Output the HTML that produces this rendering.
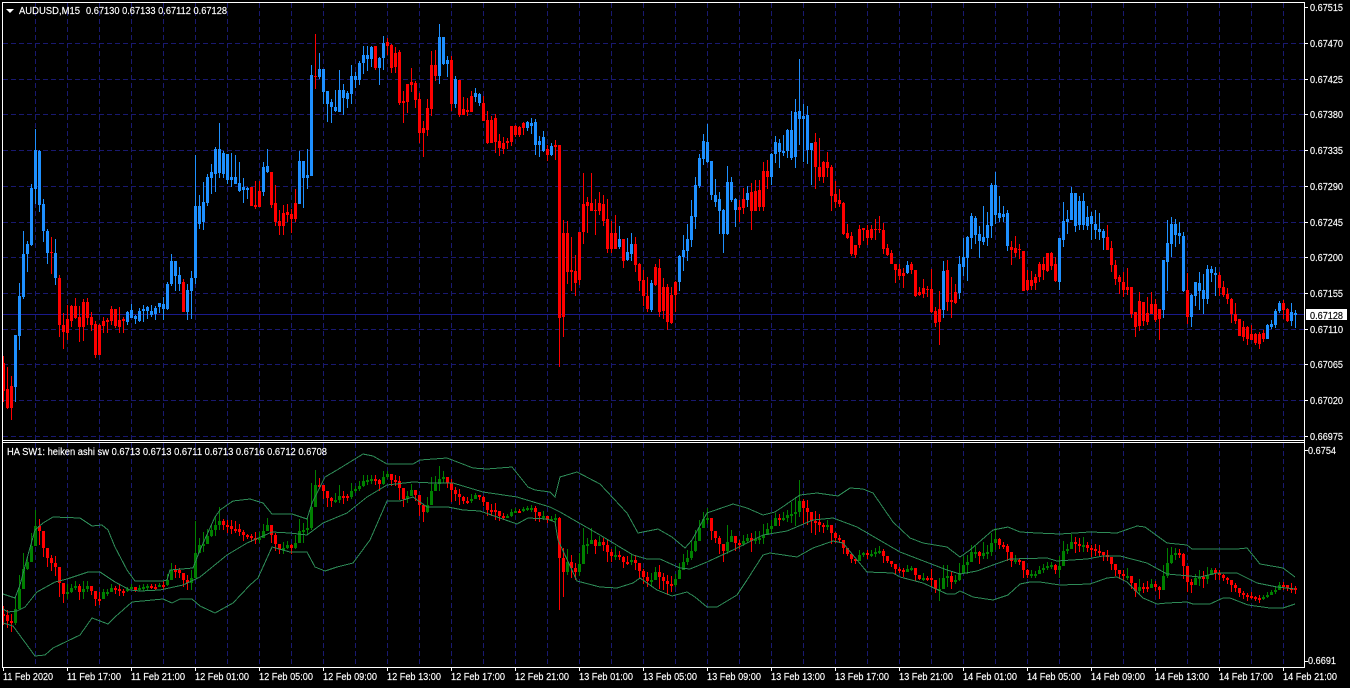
<!DOCTYPE html>
<html>
<head>
<meta charset="utf-8">
<title>AUDUSD,M15</title>
<style>
html,body{margin:0;padding:0;background:#000;width:1350px;height:688px;overflow:hidden}
svg{display:block}
text{font-family:"Liberation Sans",sans-serif;font-size:10px;fill:#fff;stroke:#fff;stroke-width:.15px}
</style>
</head>
<body>
<svg id="c" xmlns="http://www.w3.org/2000/svg" width="1350" height="688" viewBox="0 0 1350 688">
<rect width="1350" height="688" fill="#000"/>
<g id="grid" shape-rendering="crispEdges" stroke="#191970" stroke-width="1" stroke-dasharray="5 3" fill="none"></g>
<path d="M3 314.5H1304" stroke="#1a1a8c" stroke-width="1" shape-rendering="crispEdges"/>
<g id="main" shape-rendering="crispEdges"></g>
<g id="bands" fill="none" stroke="#2E8B57" stroke-width="1" shape-rendering="crispEdges">
<polyline points="3,594 15,598 20,585 28,555 35,530 43,523 53,517 80,518 92,526 102,525 108,530 115,547 127,570 135,581 163,581 167,580 170,570 193,568 200,550 215,517 220,510 233,501 250,499 263,503 272,514 292,514 307,519 312,503 325,477 337,470 363,454 373,456 387,464 413,464 420,460 447,458 473,468 487,469 512,467 528,487 535,490 550,492 555,497 560,477 577,472 600,484 627,513 638,533 658,529 672,537 685,548 692,540 707,513 733,504 747,508 763,515 775,512 800,495 817,493 838,496 850,488 863,489 873,493 893,522 910,538 923,543 947,547 960,557 970,550 993,530 1008,527 1020,532 1037,533 1060,534 1090,532 1117,533 1137,526 1145,527 1167,543 1187,545 1192,549 1237,549 1247,548 1260,564 1283,568 1295,577"/>
<polyline points="3,609 8,612 17,611 25,607 37,592 55,582 67,579 88,572 100,572 115,582 130,590 140,591 160,590 183,585 200,577 227,555 247,543 272,532 290,533 307,535 323,523 347,513 367,497 387,485 413,482 433,483 453,483 483,492 517,497 550,507 560,512 600,535 633,555 647,559 660,559 680,568 690,569 707,562 733,550 763,535 787,531 813,520 833,518 857,527 900,552 947,570 960,574 977,571 993,565 1010,559 1047,558 1057,561 1087,559 1103,556 1120,556 1147,563 1167,574 1200,577 1217,573 1237,573 1257,583 1277,587 1295,589"/>
<polyline points="3,623 13,626 35,656 45,655 53,648 80,635 92,618 108,624 115,617 132,602 163,599 172,603 180,599 192,599 200,606 215,613 233,603 250,585 258,578 272,547 290,552 307,552 315,567 325,571 337,567 353,563 370,540 387,501 400,501 413,497 427,507 448,507 463,510 480,511 517,524 528,518 547,519 555,522 558,540 577,581 600,587 617,588 633,583 640,578 657,590 672,596 687,592 695,597 707,607 717,607 737,595 747,580 763,555 770,553 797,557 813,548 833,541 843,543 867,572 893,573 900,577 923,583 947,594 955,594 960,591 973,597 993,600 1008,595 1020,584 1030,582 1040,582 1060,585 1090,584 1107,578 1117,577 1127,582 1143,598 1157,604 1167,603 1187,602 1193,604 1210,604 1223,598 1230,598 1248,605 1270,608 1283,608 1295,604"/>
</g>
<g id="frame" shape-rendering="crispEdges" fill="#fff">
<rect x="2" y="2" width="1303" height="1"/>
<rect x="2" y="2" width="1" height="666"/>
<rect x="1304" y="2" width="1" height="666"/>
<rect x="2" y="440" width="1303" height="1"/>
<rect x="2" y="442" width="1303" height="1"/>
<rect x="2" y="667" width="1303" height="1"/>
</g>
<path d="M6 9h8l-4 4z" fill="#fff"/>
<text x="19" y="14" textLength="61" lengthAdjust="spacingAndGlyphs">AUDUSD,M15</text>
<text x="86" y="14" textLength="141" lengthAdjust="spacingAndGlyphs">0.67130 0.67133 0.67112 0.67128</text>
<text x="7" y="455" textLength="320" lengthAdjust="spacingAndGlyphs">HA SW1: heiken ashi sw 0.6713 0.6713 0.6711 0.6713 0.6716 0.6712 0.6708</text>
<g id="prices">
<text x="1310" y="11" textLength="33" lengthAdjust="spacingAndGlyphs">0.67515</text>
<text x="1310" y="47" textLength="33" lengthAdjust="spacingAndGlyphs">0.67470</text>
<text x="1310" y="83" textLength="33" lengthAdjust="spacingAndGlyphs">0.67425</text>
<text x="1310" y="118" textLength="33" lengthAdjust="spacingAndGlyphs">0.67380</text>
<text x="1310" y="154" textLength="33" lengthAdjust="spacingAndGlyphs">0.67335</text>
<text x="1310" y="190" textLength="33" lengthAdjust="spacingAndGlyphs">0.67290</text>
<text x="1310" y="226" textLength="33" lengthAdjust="spacingAndGlyphs">0.67245</text>
<text x="1310" y="261" textLength="33" lengthAdjust="spacingAndGlyphs">0.67200</text>
<text x="1310" y="297" textLength="33" lengthAdjust="spacingAndGlyphs">0.67155</text>
<text x="1310" y="333" textLength="33" lengthAdjust="spacingAndGlyphs">0.67110</text>
<text x="1310" y="368" textLength="33" lengthAdjust="spacingAndGlyphs">0.67065</text>
<text x="1310" y="404" textLength="33" lengthAdjust="spacingAndGlyphs">0.67020</text>
<text x="1310" y="440" textLength="33" lengthAdjust="spacingAndGlyphs">0.66975</text>
</g>
<rect x="1306" y="309" width="41" height="11" fill="#fff"/>
<text x="1310" y="319" textLength="33" lengthAdjust="spacingAndGlyphs" style="fill:#000;stroke:#000">0.67128</text>
<text x="1308" y="454" textLength="28" lengthAdjust="spacingAndGlyphs">0.6754</text>
<text x="1308" y="664" textLength="28" lengthAdjust="spacingAndGlyphs">0.6691</text>
<g id="times">
<text x="3" y="680" textLength="50" lengthAdjust="spacingAndGlyphs">11 Feb 2020</text>
<text x="67" y="680" textLength="54" lengthAdjust="spacingAndGlyphs">11 Feb 17:00</text>
<text x="131" y="680" textLength="54" lengthAdjust="spacingAndGlyphs">11 Feb 21:00</text>
<text x="195" y="680" textLength="54" lengthAdjust="spacingAndGlyphs">12 Feb 01:00</text>
<text x="259" y="680" textLength="54" lengthAdjust="spacingAndGlyphs">12 Feb 05:00</text>
<text x="323" y="680" textLength="54" lengthAdjust="spacingAndGlyphs">12 Feb 09:00</text>
<text x="387" y="680" textLength="54" lengthAdjust="spacingAndGlyphs">12 Feb 13:00</text>
<text x="451" y="680" textLength="54" lengthAdjust="spacingAndGlyphs">12 Feb 17:00</text>
<text x="515" y="680" textLength="54" lengthAdjust="spacingAndGlyphs">12 Feb 21:00</text>
<text x="579" y="680" textLength="54" lengthAdjust="spacingAndGlyphs">13 Feb 01:00</text>
<text x="643" y="680" textLength="54" lengthAdjust="spacingAndGlyphs">13 Feb 05:00</text>
<text x="707" y="680" textLength="54" lengthAdjust="spacingAndGlyphs">13 Feb 09:00</text>
<text x="771" y="680" textLength="54" lengthAdjust="spacingAndGlyphs">13 Feb 13:00</text>
<text x="835" y="680" textLength="54" lengthAdjust="spacingAndGlyphs">13 Feb 17:00</text>
<text x="899" y="680" textLength="54" lengthAdjust="spacingAndGlyphs">13 Feb 21:00</text>
<text x="963" y="680" textLength="54" lengthAdjust="spacingAndGlyphs">14 Feb 01:00</text>
<text x="1027" y="680" textLength="54" lengthAdjust="spacingAndGlyphs">14 Feb 05:00</text>
<text x="1091" y="680" textLength="54" lengthAdjust="spacingAndGlyphs">14 Feb 09:00</text>
<text x="1155" y="680" textLength="54" lengthAdjust="spacingAndGlyphs">14 Feb 13:00</text>
<text x="1219" y="680" textLength="54" lengthAdjust="spacingAndGlyphs">14 Feb 17:00</text>
<text x="1283" y="680" textLength="54" lengthAdjust="spacingAndGlyphs">14 Feb 21:00</text>
</g>
</svg>
<script>
var D="r356,363,391,402 r367,389,408,409 r376,386,408,420 b335,335,387,402 b283,296,336,350 b231,254,297,299 b241,244,254,272 b184,188,245,246 b129,150,189,204 b150,151,205,212 b199,204,231,242 b229,231,253,264 r237,252,253,274 b239,253,278,285 r275,278,325,337 r313,325,332,349 r305,319,333,340 r305,306,321,327 r298,306,318,319 r306,317,327,342 r299,302,327,341 r298,302,318,325 r312,317,325,331 r321,324,355,358 r324,325,355,355 r317,321,326,333 r318,320,322,333 r306,309,321,325 r309,309,326,328 r307,320,327,333 r317,319,321,333 b311,312,322,325 b304,310,318,318 b315,316,319,324 b308,311,321,322 b305,309,311,322 b306,307,311,319 "+
"b305,311,315,317 b306,308,314,320 b303,303,307,313 b297,304,309,320 b282,284,309,310 b254,261,284,286 b261,261,276,291 b267,275,284,291 r279,282,312,312 b284,290,312,320 b271,278,291,319 b155,206,278,284 b195,206,224,229 b182,202,222,230 b174,177,203,206 b164,172,178,194 b147,149,174,192 b123,149,173,178 b151,153,174,178 b154,154,180,184 b153,177,180,187 b155,177,184,184 b162,183,191,192 b178,187,190,203 b187,188,190,199 r187,187,206,206 r181,205,207,209 r181,191,207,207 b162,167,192,196 b149,166,172,173 r172,172,205,208 r185,203,222,226 r210,221,226,235 r205,213,226,235 r204,212,215,222 r209,214,219,233 r189,203,219,222 b151,161,204,204 b161,161,178,208 b149,175,178,189 b65,75,176,176 r34,76,77,89 b53,69,77,79 b69,69,92,104 b91,91,104,122 b99,102,107,123 b90,107,111,112 b70,90,112,112 b84,90,98,115 b91,93,99,108 "+
"b65,76,94,104 b72,76,80,88 b61,63,80,85 b46,55,63,74 b46,55,59,71 b46,47,59,67 r46,46,68,70 b57,58,68,85 b36,43,58,70 r38,42,46,55 r44,45,68,73 r47,53,67,73 r50,52,103,105 r91,101,103,123 r84,84,102,113 r68,82,85,92 r81,83,100,108 r93,99,133,143 r121,128,133,157 r99,108,130,136 r51,65,109,116 r50,65,76,81 b24,37,76,84 b37,37,64,65 b56,60,64,77 r56,60,104,111 b76,79,104,108 r80,80,115,117 r97,109,115,115 r98,110,112,116 r91,96,112,112 b88,93,97,102 b93,94,103,106 r96,103,121,121 r111,120,143,144 r116,120,143,143 r114,118,142,153 r134,141,148,156 r137,143,149,154 r138,141,143,149 r126,126,142,146 r125,126,135,137 r126,127,135,137 r122,123,128,135 b121,122,128,131 b118,123,126,134 b119,122,145,155 b136,141,145,157 b131,137,151,152 r145,149,155,161 b143,146,155,156 r140,145,147,160 r145,145,318,367 r220,233,317,337 r221,233,272,284 r237,270,272,291 r255,271,283,296 r232,232,280,285 "+
"r173,204,232,244 r197,202,206,233 r173,203,211,211 r199,210,211,235 r192,203,211,215 r195,204,221,226 r199,219,249,253 r221,233,249,253 r215,233,249,249 b226,239,247,249 r239,239,261,268 b238,252,260,261 b233,244,254,261 r237,244,265,272 r263,264,281,291 r270,280,296,306 r277,296,309,312 b280,283,310,312 r264,267,285,286 r259,268,312,317 r278,287,311,319 r284,287,322,330 r287,295,323,324 r281,282,295,312 b255,256,282,291 b235,250,257,271 b224,239,251,261 b200,216,240,247 b177,185,217,229 b154,158,186,188 b134,141,159,165 b124,142,162,163 b161,161,195,200 b179,195,202,207 b192,199,211,234 b209,210,234,253 b166,182,234,235 b177,182,200,202 b198,199,210,227 r200,207,210,222 r188,199,208,214 b186,193,200,207 r183,192,211,230 r180,191,211,211 r180,190,207,211 r162,171,207,211 r160,171,177,189 b153,154,177,185 b136,142,154,163 b139,143,152,168 b135,151,153,156 b129,130,151,158 b111,130,158,160 b99,112,157,168 b59,111,119,145 b104,116,119,162 b106,115,150,164 b143,143,150,185 r133,142,167,189 r138,167,177,181 r161,162,177,183 r152,162,168,177 r165,167,196,211 r181,194,202,208 r189,200,204,207 r202,203,234,235 r224,233,238,239 "+
"r232,236,254,256 r245,245,255,258 r225,229,245,248 r228,228,230,241 r225,230,238,245 r225,229,238,240 r219,229,230,240 r216,229,230,233 r223,230,249,254 r244,248,255,256 r250,253,264,264 r264,264,270,283 r264,269,276,280 r268,273,276,288 b261,265,273,274 r262,264,270,274 r270,270,296,297 r287,292,295,296 r279,288,294,298 r286,289,290,297 r269,289,312,313 r307,311,323,327 r291,309,322,345 b261,271,310,318 r260,270,302,311 r277,300,302,318 r284,292,303,304 b256,264,293,299 b238,257,267,276 b236,237,258,281 b213,216,238,249 b216,218,235,244 b226,234,241,258 b206,237,242,245 b212,225,238,246 b183,185,226,238 b172,185,215,224 b196,213,218,222 b206,214,217,222 b210,213,246,251 r241,247,250,265 r236,248,253,257 r244,249,250,259 r251,251,291,291 r270,280,290,291 r271,280,286,290 r274,277,283,290 r262,264,277,282 r257,264,270,280 r253,253,271,272 r252,253,266,270 r257,264,281,282 b238,238,282,290 b202,221,240,247 b210,219,222,234 b187,193,220,220 b193,193,226,232 b196,201,225,230 "+
"b193,201,225,230 b206,217,226,230 b212,216,224,240 b210,224,230,239 b213,229,232,240 b229,231,238,250 r225,237,250,250 r241,248,265,272 r260,265,279,285 r275,277,282,294 r272,282,290,297 r268,287,290,295 r287,287,314,318 r312,312,327,337 r292,301,326,331 r302,302,321,326 r297,313,322,325 r292,304,314,314 r299,304,320,322 r309,309,319,340 b260,260,310,318 b220,243,262,291 b217,224,244,257 b219,224,235,247 b222,233,236,244 b232,236,291,292 r273,290,317,324 b294,295,317,327 b282,282,296,306 b272,283,291,310 b274,290,299,314 b265,269,299,304 b266,269,273,282 b267,273,275,296 r272,275,288,296 r281,287,295,297 r288,294,299,304 r298,299,314,323 r303,314,321,324 r319,319,336,336 r321,327,337,341 r326,327,339,345 r325,334,340,340 r333,334,343,345 r332,334,344,349 r330,333,339,342 b324,325,339,339 b320,324,327,329 b309,311,325,328 b301,303,311,313 r300,303,310,319 r308,309,321,322 b303,312,321,326 b310,313,315,328";
var S=function(id){return document.getElementById(id)};
var NS="http://www.w3.org/2000/svg";
function path(parent,d,fill){var p=document.createElementNS(NS,"path");p.setAttribute("d",d);p.setAttribute("fill",fill);parent.appendChild(p)}
function rect(x,y,w,h){return "M"+x+" "+y+"h"+w+"v"+h+"h"+(-w)+"z"}
var g="";
for(var i=35;i<1304;i+=32){g+="M"+(i+.5)+" 3V440M"+(i+.5)+" 443V667"}
var hs=[43,79,114,150,186,222,257,293,329,364,400,436];
hs.forEach(function(y){g+="M3 "+(y+.5)+"H1304"});
var gp=document.createElementNS(NS,"path");gp.setAttribute("d",g);S("grid").appendChild(gp);
var M=S("main"),blue="",red="",green="",red2="";
var ly=function(y){return Math.round(458.37+0.4216*(y-7))};
var phc=null;
D.trim().split(/\s+/).forEach(function(s,k){
  var up=s[0]=="b",v=s.slice(1).split(",").map(Number),wt=v[0],bt=v[1],bb=v[2],wb=v[3],x=3+4*k;
  var r=rect(x,wt,1,Math.max(wb-wt,1))+rect(x-1,bt,3,Math.max(bb-bt,1));
  if(up)blue+=r;else red+=r;
  var o=up?bb:bt,c=up?bt:bb;
  var hc=(o+wt+wb+c)/4,ho=phc===null?(o+c)/2:phc;
  var t=ly(Math.min(ho,hc)),b=ly(Math.max(ho,hc)),wa=ly(Math.min(wt,ho,hc)),wz=ly(Math.max(wb,ho,hc));
  var q=rect(x,wa,1,Math.max(wz-wa,1))+rect(x-1,t,3,Math.max(b-t,2));
  if(hc<ho)green+=q;else red2+=q;
  phc=hc;
});
path(M,blue,"#1E90FF");path(M,red,"#FF0000");path(M,green,"#008000");path(M,red2,"#FF0000");
var t="",f=S("frame");
[7,43,79,114,150,186,222,257,293,329,364,400,436].forEach(function(y){t+=rect(1305,y,3,1)});
t+=rect(1305,450,3,1)+rect(1305,661,3,1);
for(var j=3;j<1304;j+=64){t+=rect(j,668,1,3)}
path(f,t,"#fff");
</script>
</body>
</html>
